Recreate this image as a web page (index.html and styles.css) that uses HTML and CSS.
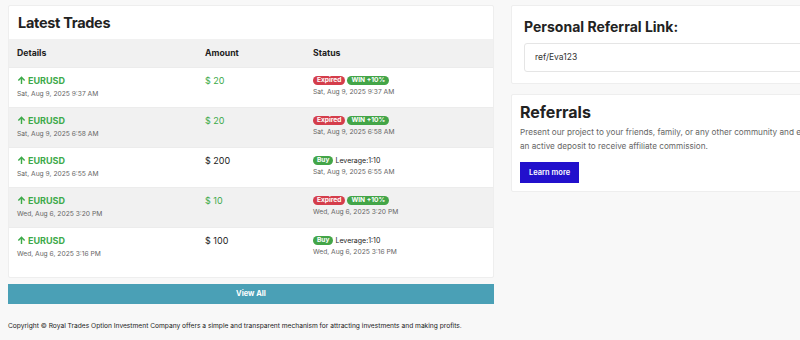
FILE: index.html
```html
<!DOCTYPE html>
<html>
<head>
<meta charset="utf-8">
<link rel="stylesheet" href="styles.css">
</head>
<body>
<div class="page">
  <div class="left">
    <div class="card trades">
      <h2 class="title">Latest Trades</h2>
      <table class="tbl">
        <thead>
          <tr><th class="c1">Details</th><th class="c2">Amount</th><th class="c3">Status</th></tr>
        </thead>
        <tbody>
          <tr>
            <td><div class="pair"><svg class="arr" viewBox="0 0 10 10"><path d="M5 9V1.5M1.5 5L5 1.5 8.5 5" fill="none" stroke="currentColor" stroke-width="1.6"/></svg>EURUSD</div><div class="date">Sat, Aug 9, 2025 9:37 AM</div></td>
            <td><div class="amt win">$ 20</div></td>
            <td><div class="st"><span class="badge red">Expired</span><span class="badge green">WIN +10%</span></div><div class="date">Sat, Aug 9, 2025 9:37 AM</div></td>
          </tr>
          <tr class="alt">
            <td><div class="pair"><svg class="arr" viewBox="0 0 10 10"><path d="M5 9V1.5M1.5 5L5 1.5 8.5 5" fill="none" stroke="currentColor" stroke-width="1.6"/></svg>EURUSD</div><div class="date">Sat, Aug 9, 2025 6:58 AM</div></td>
            <td><div class="amt win">$ 20</div></td>
            <td><div class="st"><span class="badge red">Expired</span><span class="badge green">WIN +10%</span></div><div class="date">Sat, Aug 9, 2025 6:58 AM</div></td>
          </tr>
          <tr>
            <td><div class="pair"><svg class="arr" viewBox="0 0 10 10"><path d="M5 9V1.5M1.5 5L5 1.5 8.5 5" fill="none" stroke="currentColor" stroke-width="1.6"/></svg>EURUSD</div><div class="date">Sat, Aug 9, 2025 6:55 AM</div></td>
            <td><div class="amt">$ 200</div></td>
            <td><div class="st"><span class="badge green">Buy</span><span class="lev">Leverage:1:10</span></div><div class="date">Sat, Aug 9, 2025 6:55 AM</div></td>
          </tr>
          <tr class="alt">
            <td><div class="pair"><svg class="arr" viewBox="0 0 10 10"><path d="M5 9V1.5M1.5 5L5 1.5 8.5 5" fill="none" stroke="currentColor" stroke-width="1.6"/></svg>EURUSD</div><div class="date">Wed, Aug 6, 2025 3:20 PM</div></td>
            <td><div class="amt win">$ 10</div></td>
            <td><div class="st"><span class="badge red">Expired</span><span class="badge green">WIN +10%</span></div><div class="date">Wed, Aug 6, 2025 3:20 PM</div></td>
          </tr>
          <tr>
            <td><div class="pair"><svg class="arr" viewBox="0 0 10 10"><path d="M5 9V1.5M1.5 5L5 1.5 8.5 5" fill="none" stroke="currentColor" stroke-width="1.6"/></svg>EURUSD</div><div class="date">Wed, Aug 6, 2025 3:16 PM</div></td>
            <td><div class="amt">$ 100</div></td>
            <td><div class="st"><span class="badge green">Buy</span><span class="lev">Leverage:1:10</span></div><div class="date">Wed, Aug 6, 2025 3:16 PM</div></td>
          </tr>
        </tbody>
      </table>
    </div>
    <a class="viewall">View All</a>
    <p class="copy">Copyright © Royal Trades Option Investment Company offers a simple and transparent mechanism for attracting investments and making profits.</p>
  </div>
  <div class="right">
    <div class="card ref">
      <h3 class="reftitle">Personal Referral Link:</h3>
      <div class="input">ref/Eva123</div>
    </div>
    <div class="card refs">
      <h2 class="rtitle">Referrals</h2>
      <p class="desc"><span class="line">Present our project to your friends, family, or any other community and earn with us. Each referral must have</span><span class="line">an active deposit to receive affiliate commission.</span></p>
      <a class="learn">Learn more</a>
    </div>
  </div>
</div>
</body>
</html>
```

FILE: styles.css
```css
* { box-sizing: border-box; }
html, body { margin: 0; padding: 0; }
body {
  background: #f8f8f8;
  font-family: Inter, "Liberation Sans", sans-serif;
  color: #222;
  overflow: hidden;
  width: 800px;
  height: 340px;
}
.page {
  display: grid;
  grid-template-columns: 486px 330px;
  column-gap: 17px;
  padding: 5px 0 0 8px;
  align-items: start;
}
.card {
  background: #fff;
  border: 1px solid #eeeeee;
  border-radius: 2px;
}
.trades { padding-bottom: 10px; }
.title {
  margin: 0;
  font-size: 14.5px;
  letter-spacing: -0.3px;
  font-weight: 700;
  color: #222;
  padding: 8px 9px 0;
  height: 33px;
}
.tbl {
  width: 100%;
  border-collapse: collapse;
}
.tbl th {
  background: #f1f1f1;
  text-align: left;
  font-size: 8.7px;
  font-weight: 700;
  color: #222;
  height: 28px;
  padding: 0 0 0 8px;
}
.c1 { width: 188px; }
.c2 { width: 108px; }
.tbl td {
  vertical-align: top;
  padding: 7px 0 0 8px;
  height: 40px;
  border-top: 1px solid #ececec;
}
.tbl tr.alt td { background: #f1f1f1; }
.pair {
  display: flex;
  align-items: center;
  gap: 2px;
  color: #3daa4a;
  font-weight: 700;
  font-size: 9px;
  line-height: 12px;
}
.arr { width: 9px; height: 9px; color: #3daa4a; }
.date {
  font-size: 6.7px;
  color: #666;
  margin-top: 3px;
  line-height: 9px;
}
.amt {
  font-size: 9px;
  line-height: 12px;
  color: #222;
}
.amt.win { color: #3daa4a; }
.st {
  display: flex;
  align-items: center;
  height: 11px;
}
.st + .date { margin-top: 2px; }
.st .badge + .badge { margin-left: 2px; }
.badge {
  display: inline-block;
  font-size: 6.6px;
  font-weight: 700;
  color: #fff;
  line-height: 9px;
  padding: 0 4px;
  border-radius: 5px;
}
.red { background: #d43d4b; }
.green { background: #43a548; }
.lev {
  font-size: 7px;
  color: #222;
  margin-left: 2px;
}
.viewall {
  display: block;
  margin-top: 6px;
  background: #4aa0b6;
  color: #fff;
  text-align: center;
  font-size: 7.5px;
  font-weight: 700;
  height: 20px;
  line-height: 20px;
}
.copy {
  margin: 18px 0 0;
  font-size: 6.65px;
  white-space: nowrap;
  color: #222;
}
.ref {
  padding: 12px 0 11px 12px;
}
.reftitle {
  margin: 0 0 8px;
  font-size: 14px;
  font-weight: 700;
  color: #222;
}
.input {
  border: 1px solid #e5e5e5;
  border-radius: 3px;
  height: 29px;
  line-height: 27px;
  padding-left: 10px;
  font-size: 8.5px;
  color: #333;
}
.refs {
  margin-top: 10px;
  padding: 7px 0 8px 8px;
}
.rtitle {
  margin: 0;
  font-size: 16px;
  font-weight: 700;
  color: #222;
  line-height: 20px;
}
.desc {
  margin: 3px 0 6px;
  font-size: 8.2px;
  line-height: 14px;
  color: #666;
}
.line { display: block; white-space: nowrap; }
.learn {
  display: inline-block;
  background: #2210cc;
  color: #fff;
  font-size: 7.5px;
  font-weight: 600;
  padding: 0 9px;
  height: 21px;
  line-height: 21px;
}
```
